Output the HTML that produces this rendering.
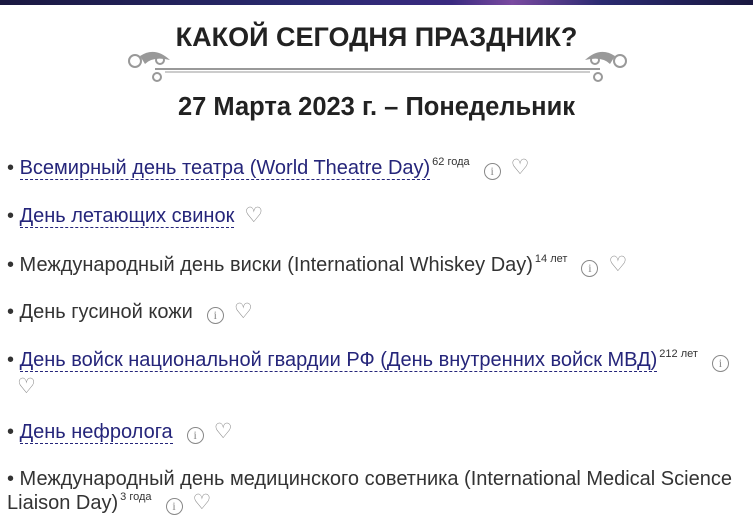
<!DOCTYPE html>
<html><head><meta charset="utf-8"><style>
body{margin:0;width:753px;height:530px;overflow:hidden;background:#fff;font-family:"Liberation Sans",sans-serif;color:#333;position:relative}
.bar{position:absolute;left:0;top:0;width:753px;height:5px;background:linear-gradient(90deg,#1a1840,#2a2a70 40%,#3a2a80 60%,#7a4aa0 68%,#2a2a70 80%,#1a1840)}
h1{position:absolute;left:0;width:753px;top:22px;margin:0;text-align:center;font-size:27px;font-weight:bold;color:#222}
h2{position:absolute;left:0;width:753px;top:93px;margin:0;text-align:center;font-size:25.5px;font-weight:bold;color:#222}
.orn{position:absolute;left:125px;top:46px}
.it{position:absolute;left:7px;font-size:20px;line-height:23px;color:#333;width:740px}
a{color:#25257a;text-decoration:none;border-bottom:1px dashed #25257a}
sup{font-size:11px;vertical-align:0;position:relative;top:-9px;margin-left:2px}
.i{display:inline-block;width:15px;height:15px;border:1.5px solid #888;border-radius:50%;font-size:12px;line-height:15px;text-align:center;color:#888;vertical-align:-1px;margin-left:14px;font-family:"Liberation Serif",serif}
.h{color:#888;font-size:21px;margin-left:10px}
</style></head><body>
<div class="bar"></div>
<h1>КАКОЙ СЕГОДНЯ ПРАЗДНИК?</h1>
<svg class="orn" width="505" height="40" viewBox="0 0 505 40">
<g fill="none" stroke="#999" stroke-width="2">
<line x1="30" y1="23" x2="475" y2="23"/>
<line x1="40" y1="26" x2="465" y2="26" stroke-width="1"/>
<circle cx="10" cy="15" r="6"/><circle cx="35" cy="14" r="4"/><circle cx="32" cy="31" r="4"/>
<circle cx="495" cy="15" r="6"/><circle cx="470" cy="14" r="4"/><circle cx="473" cy="31" r="4"/>
</g>
<g fill="#999"><path d="M15 10 Q30 0 45 14 Q28 10 20 18Z"/><path d="M490 10 Q475 0 460 14 Q477 10 485 18Z"/></g>
</svg>
<h2>27 Марта 2023 г. – Понедельник</h2>
<div class="it" style="top:156px">• <a>Всемирный день театра (World Theatre Day)</a><sup>62 года</sup><span class="i">i</span><span class="h">♡</span></div>
<div class="it" style="top:204px">• <a>День летающих свинок</a><span class="h">♡</span></div>
<div class="it" style="top:253px">• Международный день виски (International Whiskey Day)<sup>14 лет</sup><span class="i">i</span><span class="h">♡</span></div>
<div class="it" style="top:300px">• День гусиной кожи<span class="i">i</span><span class="h">♡</span></div>
<div class="it" style="top:349px">• <a>День войск национальной гвардии РФ (День внутренних войск МВД)</a><sup>212 лет</sup><span class="i">i</span><br><span class="h" style="margin-left:10px">♡</span></div>
<div class="it" style="top:420px">• <a>День нефролога</a><span class="i">i</span><span class="h">♡</span></div>
<div class="it" style="top:468px">• Международный день медицинского советника (International Medical Science Liaison Day)<sup>3 года</sup><span class="i">i</span><span class="h">♡</span></div>
</body></html>
